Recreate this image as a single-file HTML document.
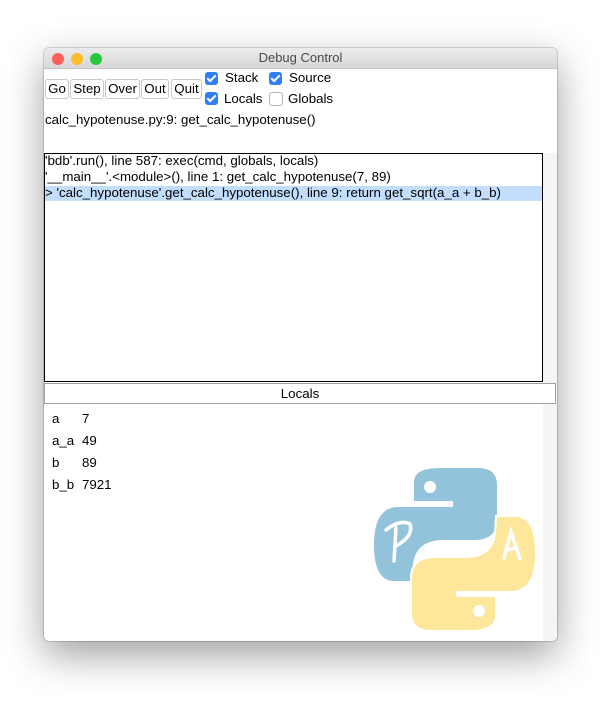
<!DOCTYPE html>
<html><head><style>
body{margin:0;width:613px;height:703px;background:#fff;font-family:"Liberation Sans",sans-serif;font-size:13.3px;color:#000;position:relative;overflow:hidden}
.win{position:absolute;left:44px;top:48px;width:513px;height:593px;background:#fff;border-radius:5px;box-shadow:0 14px 40px rgba(0,0,0,.38),0 0 0 1px rgba(0,0,0,.15);overflow:hidden}
.tb{height:20px;background:linear-gradient(#ececec,#d8d8d8);border-bottom:1px solid #c4c4c4;text-align:center;line-height:20px;font-size:13px;color:#4a4a4a}
.dot{position:absolute;top:5px;width:12px;height:12px;border-radius:50%}
.btn{position:absolute;top:31px;height:18px;border:1px solid #c8c8c8;border-radius:3px;background:#fff;line-height:18px;text-align:center;font-size:13.3px}
.cb{position:absolute;width:13px;height:13px;border-radius:3px}
.on{background:#2f7ff6}
.on:after{content:"";position:absolute;left:4px;top:1px;width:3px;height:7px;border:solid #fff;border-width:0 2px 2px 0;transform:rotate(45deg)}
.off{border:1px solid #b5b5b5;width:12px;height:12px;background:#fff}
.lbl{position:absolute;font-size:13.3px}
.t{position:absolute;white-space:nowrap}
</style></head><body>
<div class="win">
<div class="tb">Debug Control</div>
<div class="dot" style="left:8px;background:#fc5f57"></div>
<div class="dot" style="left:27px;background:#fdbc2e"></div>
<div class="dot" style="left:46px;background:#28c840"></div>
<div class="btn" style="left:1px;width:22px">Go</div>
<div class="btn" style="left:26px;width:32px">Step</div>
<div class="btn" style="left:61px;width:33px">Over</div>
<div class="btn" style="left:97px;width:26px">Out</div>
<div class="btn" style="left:127px;width:29px">Quit</div>
<div class="cb on" style="left:161px;top:24px"></div><div class="lbl" style="left:181px;top:22px">Stack</div>
<div class="cb on" style="left:225px;top:24px"></div><div class="lbl" style="left:245px;top:22px">Source</div>
<div class="cb on" style="left:161px;top:44px"></div><div class="lbl" style="left:180px;top:43px">Locals</div>
<div class="cb off" style="left:225px;top:44px"></div><div class="lbl" style="left:244px;top:43px">Globals</div>
<div class="t" style="left:1px;top:64px">calc_hypotenuse.py:9: get_calc_hypotenuse()</div>
<div style="position:absolute;left:0;top:105px;width:497px;height:227px;border:1px solid #000"></div>
<div style="position:absolute;left:1px;top:138px;width:497px;height:15px;background:#c2defc"></div>
<div class="t" style="left:1px;top:105px">'bdb'.run(), line 587: exec(cmd, globals, locals)</div>
<div class="t" style="left:1px;top:121px">'__main__'.&lt;module&gt;(), line 1: get_calc_hypotenuse(7, 89)</div>
<div class="t" style="left:1px;top:137px">&gt; 'calc_hypotenuse'.get_calc_hypotenuse(), line 9: return get_sqrt(a_a + b_b)</div>
<div style="position:absolute;left:499px;top:105px;width:14px;height:488px;background:#f5f5f5"></div>
<div style="position:absolute;left:0;top:335px;width:510px;height:19px;border:1px solid #a0a0a0;background:#fff;text-align:center;line-height:19px">Locals</div>
<div class="t" style="left:8px;top:363px">a</div><div class="t" style="left:38px;top:363px">7</div>
<div class="t" style="left:8px;top:385px">a_a</div><div class="t" style="left:38px;top:385px">49</div>
<div class="t" style="left:8px;top:407px">b</div><div class="t" style="left:38px;top:407px">89</div>
<div class="t" style="left:8px;top:429px">b_b</div><div class="t" style="left:38px;top:429px">7921</div>
</div>
<svg style="position:absolute;left:0;top:0" width="613" height="703">
<path d="M413,482 Q413,467 440,467 L478,467 Q498,467 498,485 L498,520 Q498,540 476,541 L440,541 Q416,543 414,565 L413,582 L392,582 Q373,580 373,545 Q373,507 397,506 L452,506 L452,502 L413,502 Z" fill="#93c3da" stroke="#fff" stroke-width="2"/>
<circle cx="430" cy="487" r="6" fill="#fff"/>
<g transform="translate(4 4) rotate(180 452.5 547)">
<path d="M413,482 Q413,467 440,467 L478,467 Q498,467 498,485 L498,520 Q498,540 476,541 L440,541 Q416,543 414,565 L413,582 L392,582 Q373,580 373,545 Q373,507 397,506 L452,506 L452,502 L413,502 Z" fill="#fee69a" stroke="#fff" stroke-width="2"/>
<circle cx="430" cy="487" r="6" fill="#fff"/>
</g>
<path d="M394,561 L396,528 M386,530 Q400,519 410,524 Q414,536 396,546" fill="none" stroke="#fff" stroke-width="3.5" stroke-linecap="round"/>
<path d="M504,558 L511,532 L520,559 M506,550 L517,548" fill="none" stroke="#fff" stroke-width="3.5" stroke-linecap="round"/>
</svg>
</body></html>
